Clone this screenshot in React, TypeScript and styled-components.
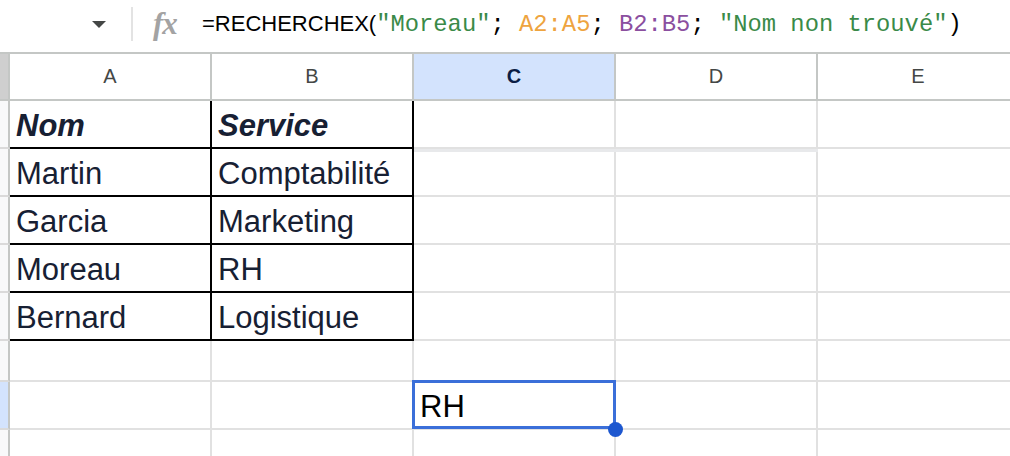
import React from 'react';
import styled, { createGlobalStyle, css } from 'styled-components';

const GlobalStyle = createGlobalStyle`
  html, body {
    margin: 0;
    padding: 0;
    background: #ffffff;
    overflow: hidden;
  }
  body {
    font-family: Arial, 'Liberation Sans', sans-serif;
  }
`;

type Token = { text: string; kind?: 'fn' | 'str' | 'rangeA' | 'rangeB' | 'punct' };

const FORMULA: Token[] = [
  { text: '=RECHERCHEX(', kind: 'fn' },
  { text: '"Moreau"', kind: 'str' },
  { text: '; ', kind: 'punct' },
  { text: 'A2:A5', kind: 'rangeA' },
  { text: '; ', kind: 'punct' },
  { text: 'B2:B5', kind: 'rangeB' },
  { text: '; ', kind: 'punct' },
  { text: '"Nom non trouvé"', kind: 'str' },
  { text: ')', kind: 'punct' },
];

const COLUMNS = ['A', 'B', 'C', 'D', 'E'];

type Row = { height: number; cells: string[]; table?: boolean; header?: boolean; active?: boolean };

const ROWS: Row[] = [
  { height: 48, cells: ['Nom', 'Service', '', '', ''], table: true, header: true },
  { height: 48, cells: ['Martin', 'Comptabilité', '', '', ''], table: true },
  { height: 48, cells: ['Garcia', 'Marketing', '', '', ''], table: true },
  { height: 48, cells: ['Moreau', 'RH', '', '', ''], table: true },
  { height: 48, cells: ['Bernard', 'Logistique', '', '', ''], table: true },
  { height: 41, cells: ['', '', '', '', ''] },
  { height: 48, cells: ['', '', 'RH', '', ''], active: true },
  { height: 48, cells: ['', '', '', '', ''] },
];

const App = () => (
  <>
    <GlobalStyle />
    <StPage>
      <StFormulaBar>
        <StNameBox>
          <StCaret />
        </StNameBox>
        <StDivider />
        <StFx>fx</StFx>
        <StFormula>
          {FORMULA.map((t, i) => (
            <StToken key={i} $kind={t.kind}>
              {t.text}
            </StToken>
          ))}
        </StFormula>
      </StFormulaBar>

      <StSheet>
        <StCorner />
        {COLUMNS.map((c) => (
          <StColHead key={c} $active={c === 'C'}>
            {c}
          </StColHead>
        ))}

        {ROWS.map((row, r) => (
          <React.Fragment key={r}>
            <StRowHead $height={row.height} $active={row.active} />
            {row.cells.map((text, c) => (
              <StCell
                key={c}
                $height={row.height}
                $table={row.table && c < 2}
                $band={r === 0 && (c === 2 || c === 3)}
                $header={row.header}
                $selected={row.active && c === 2}
              >
                {text}
              </StCell>
            ))}
          </React.Fragment>
        ))}
      </StSheet>
    </StPage>
  </>
);

export default App;

const StPage = styled.div`
  width: 1010px;
  height: 456px;
  overflow: hidden;
  background: #ffffff;
`;

const StFormulaBar = styled.div`
  display: flex;
  align-items: center;
  height: 52px;
  padding-bottom: 4px;
  box-sizing: border-box;
`;

const StNameBox = styled.div`
  display: flex;
  justify-content: flex-end;
  align-items: center;
  width: 131px;
  padding-right: 25px;
  box-sizing: border-box;
`;

const StCaret = styled.span`
  width: 0;
  height: 0;
  border-left: 7px solid transparent;
  border-right: 7px solid transparent;
  border-top: 7px solid #444746;
`;

const StDivider = styled.span`
  width: 2px;
  height: 34px;
  background: #e3e3e3;
`;

const StFx = styled.span`
  margin-left: 20px;
  width: 32px;
  font-family: 'Liberation Serif', 'DejaVu Serif', serif;
  font-style: italic;
  font-weight: 700;
  font-size: 31px;
  line-height: 30px;
  color: #a3a3a3;
  letter-spacing: -1px;
`;

const StFormula = styled.div`
  margin-left: 17px;
  white-space: pre;
  font-size: 22px;
  line-height: 26px;
  color: #000000;
`;

const tokenColors: Record<string, string> = {
  fn: '#000000',
  punct: '#000000',
  str: '#3a8a48',
  rangeA: '#eea43f',
  rangeB: '#8b4f9f',
};

const StToken = styled.span<{ $kind?: string }>`
  color: ${({ $kind }) => tokenColors[$kind ?? 'fn']};
  ${({ $kind }) =>
    $kind === 'fn'
      ? css`
          font-family: Arial, 'Liberation Sans', sans-serif;
        `
      : css`
          font-family: 'Liberation Mono', 'DejaVu Sans Mono', monospace;
          font-size: 23.8px;
        `}
`;

const StSheet = styled.div`
  display: grid;
  grid-template-columns: 10px repeat(5, 202px);
`;

const StCorner = styled.div`
  height: 49px;
  box-sizing: border-box;
  background: #cfcfcf;
  border-top: 2px solid #c4c7c5;
  border-bottom: 2px solid #c4c7c5;
  border-right: 2px solid #c4c7c5;
`;

const StColHead = styled.div<{ $active?: boolean }>`
  display: flex;
  align-items: center;
  justify-content: center;
  height: 49px;
  box-sizing: border-box;
  border-top: 2px solid #c4c7c5;
  border-bottom: 2px solid #c4c7c5;
  border-right: 2px solid #c4c7c5;
  background: ${({ $active }) => ($active ? '#d3e3fd' : '#ffffff')};
  color: ${({ $active }) => ($active ? '#0b1d45' : '#444746')};
  font-weight: ${({ $active }) => ($active ? 700 : 400)};
  font-size: 20px;
`;

const StRowHead = styled.div<{ $height: number; $active?: boolean }>`
  height: ${({ $height }) => $height}px;
  box-sizing: border-box;
  background: ${({ $active }) => ($active ? '#d3e3fd' : '#f8f9fa')};
  border-right: 2px solid #c4c7c5;
  border-bottom: 2px solid #dadada;
`;

const StCell = styled.div<{
  $height: number;
  $table?: boolean;
  $band?: boolean;
  $header?: boolean;
  $selected?: boolean;
}>`
  position: relative;
  display: flex;
  align-items: flex-end;
  height: ${({ $height }) => $height}px;
  box-sizing: border-box;
  padding: 0 5px 6px 6px;
  border-right: 2px solid ${({ $table }) => ($table ? '#000000' : '#e1e1e1')};
  border-bottom: 2px solid ${({ $table }) => ($table ? '#000000' : '#e1e1e1')};
  font-size: 31px;
  line-height: 31px;
  white-space: nowrap;
  color: ${({ $selected }) => ($selected ? '#000000' : '#172033')};
  font-weight: ${({ $header }) => ($header ? 700 : 400)};
  font-style: ${({ $header }) => ($header ? 'italic' : 'normal')};

  ${({ $band }) =>
    $band &&
    css`
      box-shadow: 0 3px 0 #e8e9eb;
      z-index: 1;
    `}

  ${({ $selected }) =>
    $selected &&
    css`
      z-index: 2;
      &::after {
        content: '';
        position: absolute;
        top: -2px;
        left: -2px;
        right: -2px;
        bottom: -1px;
        border: 3px solid #3b6fd9;
      }
      &::before {
        content: '';
        position: absolute;
        right: -9px;
        bottom: -9px;
        width: 15px;
        height: 15px;
        border-radius: 50%;
        background: #1d57cf;
        z-index: 1;
      }
    `}
`;
